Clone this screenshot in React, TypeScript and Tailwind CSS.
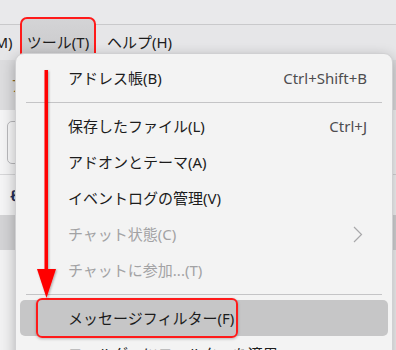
import React from 'react';

type Item =
  | { kind: 'item'; label: string; shortcut?: string; disabled?: boolean; submenu?: boolean; active?: boolean }
  | { kind: 'sep' };

const items: Item[] = [
  { kind: 'item', label: 'アドレス帳(B)', shortcut: 'Ctrl+Shift+B' },
  { kind: 'sep' },
  { kind: 'item', label: '保存したファイル(L)', shortcut: 'Ctrl+J' },
  { kind: 'item', label: 'アドオンとテーマ(A)' },
  { kind: 'item', label: 'イベントログの管理(V)' },
  { kind: 'item', label: 'チャット状態(C)', disabled: true, submenu: true },
  { kind: 'item', label: 'チャットに参加...(T)', disabled: true },
  { kind: 'sep' },
  { kind: 'item', label: 'メッセージフィルター(F)', active: true },
  { kind: 'item', label: 'フォルダーにフィルターを適用(R)' },
];

export default function App() {
  return (
    <div className="relative w-[396px] h-[350px] overflow-hidden bg-[#f1f1f2] font-['Noto_Sans','Noto_Sans_CJK_JP',sans-serif] text-[15px] text-[#1c1c1c]">
      {/* window background */}
      <div className="h-[25px] bg-[#e9e9eb] border-b border-[#c9c9cb]" />
      <div className="h-[35px] bg-[#e6e6e8] flex items-center">
        <span className="-ml-[10px] w-[30px] leading-none">(M)</span>
        <div className="relative w-[76px] h-full flex items-center justify-center">
          <div className="absolute -top-[8px] left-0 right-0 bottom-0 rounded-[7px] border-2 border-[#ff1a1a] bg-gradient-to-b from-[#d4d4d6] to-[#c9c9cb]" />
          <span className="relative leading-none">ツール(T)</span>
        </div>
        <span className="ml-[11px] leading-none">ヘルプ(H)</span>
      </div>
      <div className="h-[50px] bg-[#dcdcde] flex items-center pl-[11px] text-[#8a6a20]">ア</div>
      <div className="h-[65px] bg-[#f4f4f5] border-b border-[#d6d6d8] flex items-center pl-[7px]">
        <div className="w-[60px] h-[43px] rounded-[5px] border border-[#b9b9bc] bg-[#f7f7f8]" />
      </div>
      <div className="h-[40px] bg-[#f4f4f5] flex items-center pl-[10px] text-[#23305a] font-bold">ℓ</div>
      <div className="h-[35px] bg-[#d3d3d5]" />
      <div className="h-[100px] bg-[#f1f1f2]" />

      {/* Tools menu popup */}
      <div className="absolute left-[15px] top-[53px] w-[378px] h-[320px] rounded-t-[9px] bg-[#f3f3f3] border border-[#d0d0d2] shadow-[0_4px_14px_rgba(0,0,0,0.28)] pt-[6px]">
        {items.map((it, i) =>
          it.kind === 'sep' ? (
            <div key={i} className="h-[12px] flex items-center px-[10px]">
              <div className="h-px w-full bg-[#c4c4c6]" />
            </div>
          ) : (
            <div
              key={i}
              className={`relative h-[36px] flex items-center mx-[4px] pl-[48px] pr-[21px] rounded-[5px] ${
                it.active ? 'bg-[#c6c6c7]' : ''
              } ${it.disabled ? 'text-[#a2a2a4]' : ''}`}
            >
              {it.active && (
                <div className="absolute left-[16px] top-[-2px] w-[202px] h-[40px] rounded-[6px] border-2 border-[#ff1a1a] shadow-[0_1px_3px_rgba(0,0,0,0.25)]" />
              )}
              <span className="relative flex-1 leading-none whitespace-nowrap">{it.label}</span>
              {it.shortcut && <span className="text-[#4d4d4f] leading-none">{it.shortcut}</span>}
              {it.submenu && (
                <svg width="10" height="17" viewBox="0 0 10 17" className="mr-[4px]">
                  <polyline points="1,1 8.5,8.5 1,16" fill="none" stroke="#a8a8aa" strokeWidth="1.2" />
                </svg>
              )}
            </div>
          )
        )}
      </div>

      {/* red arrow annotation */}
      <svg className="absolute left-[34px] top-[68px]" width="26" height="234" viewBox="0 0 26 234">
        <defs>
          <filter id="sh" x="-50%" y="-10%" width="200%" height="120%">
            <feDropShadow dx="1" dy="1" stdDeviation="1" floodColor="#000" floodOpacity="0.3" />
          </filter>
        </defs>
        <g filter="url(#sh)">
          <rect x="10.5" y="2" width="3.5" height="202" fill="#ff0000" />
          <polygon points="3,201 22,201 12.5,230" fill="#ff0000" />
        </g>
      </svg>
    </div>
  );
}
